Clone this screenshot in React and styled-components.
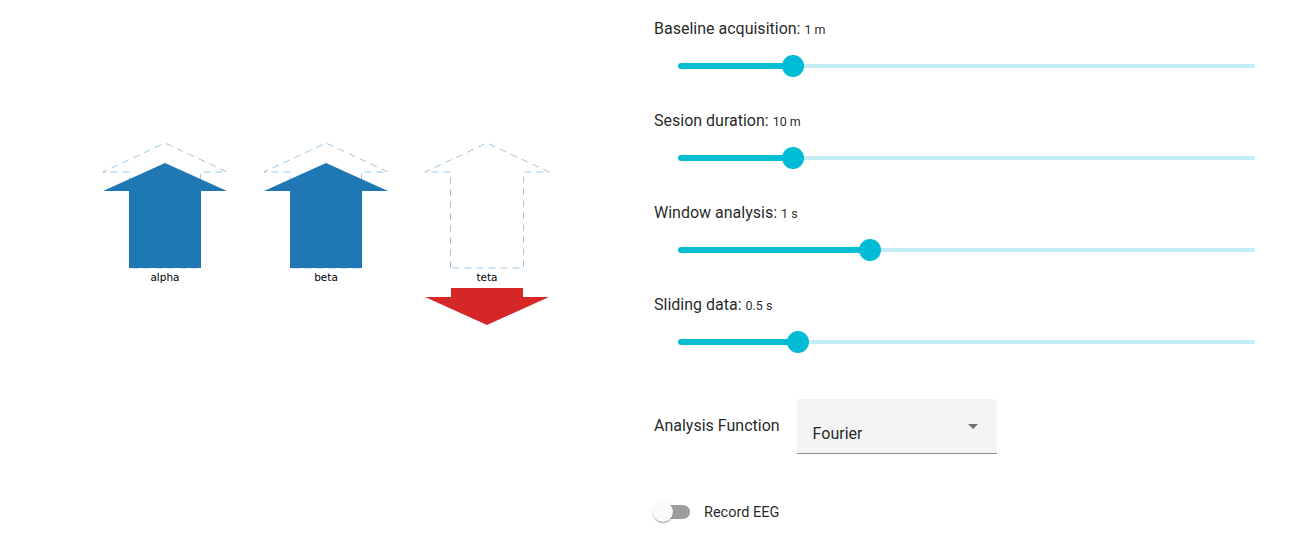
import React from "react";
import styled, { createGlobalStyle } from "styled-components";

const Global = createGlobalStyle`
  html, body { margin: 0; padding: 0; background: #fff; }
  body { font-family: Roboto, "Liberation Sans", Arial, sans-serif; color: rgba(0,0,0,0.87); }
`;

const Page = styled.div`
  display: grid;
  grid-template-columns: 654px 1fr;
  width: 1310px;
  height: 549px;
  overflow: hidden;
`;

const ChartPane = styled.div`
  position: relative;
`;

const Controls = styled.div`
  display: flex;
  flex-direction: column;
  padding-top: 16px;
`;

const SliderBlock = styled.div`
  display: flex;
  flex-direction: column;
  height: 92px;
`;

const Label = styled.div`
  height: 24px;
  line-height: 25px;
  font-size: 16px;
  white-space: nowrap;
`;

const FieldLabel = styled(Label)`
  margin-bottom: 4px;
`;

const Value = styled.span`
  font-size: 12.5px;
  margin-left: 4px;
`;

const SliderBox = styled.div`
  position: relative;
  margin-left: 24px;
  width: 577px;
  height: 52px;
`;

const Rail = styled.div`
  position: absolute;
  left: 0;
  right: 0;
  top: 24px;
  height: 4px;
  border-radius: 2px;
  background: #c2eff5;
`;

const Track = styled.div`
  position: absolute;
  left: 0;
  top: 23px;
  height: 6px;
  border-radius: 3px;
  background: #00bcd4;
`;

const Thumb = styled.div`
  position: absolute;
  top: 15px;
  width: 22px;
  height: 22px;
  margin-left: -11px;
  border-radius: 50%;
  background: #00bcd4;
`;

const SelectRow = styled.div`
  display: flex;
  align-items: center;
  gap: 17px;
  margin-top: 15px;
`;

const SelectBox = styled.div`
  position: relative;
  width: 200px;
  height: 55px;
  box-sizing: border-box;
  padding: 25px 16px 0 16px;
  background: #f4f4f4;
  border-radius: 4px 4px 0 0;
  border-bottom: 1px solid #8c8c8c;
  font-size: 16px;
  line-height: 19px;
`;

const Caret = styled.div`
  position: absolute;
  right: 19px;
  top: 25px;
  width: 0;
  height: 0;
  border-left: 5px solid transparent;
  border-right: 5px solid transparent;
  border-top: 5px solid rgba(0,0,0,0.54);
`;

const SwitchRow = styled.div`
  display: flex;
  align-items: center;
  margin-top: 39px;
  height: 38px;
`;

const SwitchRoot = styled.div`
  position: relative;
  width: 36px;
  height: 38px;
  flex: none;
`;

const SwitchTrack = styled.div`
  position: absolute;
  left: 1px;
  top: 12px;
  width: 35px;
  height: 14px;
  border-radius: 7px;
  background: #9e9e9e;
`;

const SwitchThumb = styled.div`
  position: absolute;
  left: -1px;
  top: 9px;
  width: 20px;
  height: 20px;
  border-radius: 50%;
  background: #fafafa;
  box-shadow: 0 2px 1px -1px rgba(0,0,0,0.2), 0 1px 1px 0 rgba(0,0,0,0.14), 0 1px 3px 0 rgba(0,0,0,0.12);
`;

const SwitchLabel = styled.span`
  margin-left: 14px;
  font-size: 14.5px;
`;

const sliders = [
  { label: "Baseline acquisition:", value: "1 m", pct: 0.2 },
  { label: "Sesion duration:", value: "10 m", pct: 0.2 },
  { label: "Window analysis:", value: "1 s", pct: 0.333 },
  { label: "Sliding data:", value: "0.5 s", pct: 0.208 },
];

function Slider({ pct }) {
  return (
    <SliderBox>
      <Rail />
      <Track style={{ width: `${pct * 100}%` }} />
      <Thumb style={{ left: `${pct * 100}%` }} />
    </SliderBox>
  );
}

function upArrow(cx, tipY, baseY, bottom, half = 36) {
  return `${cx - half},${bottom} ${cx - half},${baseY} ${cx - 62},${baseY} ${cx},${tipY} ${cx + 62},${baseY} ${cx + half},${baseY} ${cx + half},${bottom}`;
}

function Chart() {
  const ghost = { fill: "none", stroke: "#1f77b4", strokeOpacity: 0.42, strokeWidth: 1, strokeDasharray: "7 5" };
  const bars = [
    { cx: 165, label: "alpha", solid: true },
    { cx: 326, label: "beta", solid: true },
    { cx: 487, label: "teta", solid: false },
  ];
  return (
    <svg width="654" height="549" viewBox="0 0 654 549">
      {bars.map((b) => (
        <g key={b.label}>
          <polygon points={upArrow(b.cx, 143, 172, 268, b.solid ? 35.5 : 36.5)} {...ghost} />
          {b.solid && <polygon points={upArrow(b.cx, 163, 191, 268)} fill="#1f77b4" />}
          <text
            x={b.cx}
            y={281}
            textAnchor="middle"
            fontFamily="'DejaVu Sans', sans-serif"
            fontSize="10.5"
            fill="#000"
          >
            {b.label}
          </text>
        </g>
      ))}
      <polygon
        points={`451,288 523,288 523,297 549,297 487,325 425,297 451,297`}
        fill="#d62728"
      />
    </svg>
  );
}

export default function App() {
  return (
    <>
      <Global />
      <Page>
        <ChartPane>
          <Chart />
        </ChartPane>
        <Controls>
          {sliders.map((s) => (
            <SliderBlock key={s.label}>
              <Label>
                {s.label}
                <Value>{s.value}</Value>
              </Label>
              <Slider pct={s.pct} />
            </SliderBlock>
          ))}
          <SelectRow>
            <FieldLabel>Analysis Function</FieldLabel>
            <SelectBox>
              Fourier
              <Caret />
            </SelectBox>
          </SelectRow>
          <SwitchRow>
            <SwitchRoot>
              <SwitchTrack />
              <SwitchThumb />
            </SwitchRoot>
            <SwitchLabel>Record EEG</SwitchLabel>
          </SwitchRow>
        </Controls>
      </Page>
    </>
  );
}
